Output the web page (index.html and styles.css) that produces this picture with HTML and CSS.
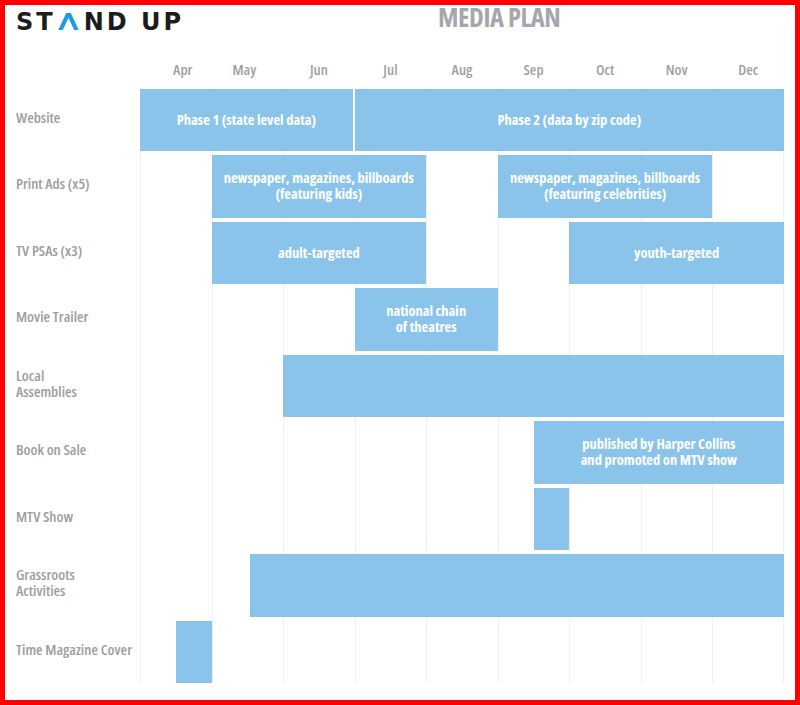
FILE: index.html
```html
<!DOCTYPE html>
<html lang="en">
<head>
<meta charset="utf-8">
<title>Stand Up – Media Plan</title>
<link rel="stylesheet" href="styles.css">
</head>
<body>
<div class="frame">
  <header class="top">
    <div class="logo">ST<svg class="logo-a" viewBox="0 0 21 17.5" width="21" height="17.5" aria-hidden="true"><polygon points="0,17.5 8.2,0 12.8,0 21,17.5 16.4,17.5 10.5,5 4.6,17.5" fill="#1f9be0"/></svg>ND UP</div>
    <h1 class="title">MEDIA PLAN</h1>
  </header>

  <div class="months">
    <span class="month month-first">Apr</span>
    <span class="month month-second">May</span>
    <span class="month">Jun</span>
    <span class="month">Jul</span>
    <span class="month">Aug</span>
    <span class="month">Sep</span>
    <span class="month">Oct</span>
    <span class="month">Nov</span>
    <span class="month">Dec</span>
  </div>

  <div class="chart">
    <div class="gl" style="grid-column: 2 / 4"></div>
    <div class="gl" style="grid-column: 4 / 6"></div>
    <div class="gl" style="grid-column: 6 / 8"></div>
    <div class="gl" style="grid-column: 8 / 10"></div>
    <div class="gl" style="grid-column: 10 / 12"></div>
    <div class="gl" style="grid-column: 12 / 14"></div>
    <div class="gl" style="grid-column: 14 / 16"></div>
    <div class="gl" style="grid-column: 16 / 18"></div>
    <div class="gl gl-last" style="grid-column: 18 / 20"></div>

    <div class="label r1">Website</div>
    <div class="bar r1 bar-split" style="grid-column: 2 / 8">Phase 1 (state level data)</div>
    <div class="bar r1" style="grid-column: 8 / 20">Phase 2 (data by zip code)</div>

    <div class="label r2">Print Ads (x5)</div>
    <div class="bar r2" style="grid-column: 4 / 10">newspaper, magazines, billboards<br>(featuring kids)</div>
    <div class="bar r2" style="grid-column: 12 / 18">newspaper, magazines, billboards<br>(featuring celebrities)</div>

    <div class="label r3">TV PSAs (x3)</div>
    <div class="bar r3" style="grid-column: 4 / 10">adult-targeted</div>
    <div class="bar r3" style="grid-column: 14 / 20">youth-targeted</div>

    <div class="label r4">Movie Trailer</div>
    <div class="bar r4" style="grid-column: 8 / 12">national chain<br>of theatres</div>

    <div class="label r5">Local<br>Assemblies</div>
    <div class="bar r5" style="grid-column: 6 / 20"></div>

    <div class="label r6">Book on Sale</div>
    <div class="bar r6" style="grid-column: 13 / 20">published by Harper Collins<br>and promoted on MTV show</div>

    <div class="label r7">MTV Show</div>
    <div class="bar r7" style="grid-column: 13 / 14"></div>

    <div class="label r8">Grassroots<br>Activities</div>
    <div class="bar r8 bar-late" style="grid-column: 5 / 20"></div>

    <div class="label r9">Time Magazine Cover</div>
    <div class="bar r9" style="grid-column: 3 / 4"></div>
  </div>
</div>
</body>
</html>
```

FILE: styles.css
```css
* { box-sizing: border-box; }

html, body {
  margin: 0;
  padding: 0;
  background: #ffffff;
}

.frame {
  width: 800px;
  height: 705px;
  border: 5px solid #ff0000;
  padding: 0 11px;
  font-family: "Open Sans", "DejaVu Sans Condensed", sans-serif;
  font-stretch: 75%;
  background: #ffffff;
  overflow: hidden;
}

/* ---------- header ---------- */
.top {
  display: grid;
  grid-template-columns: 422px auto;
  height: 52px;
}

.logo {
  margin-top: 5.2px;
  height: 24px;
  font-family: "DejaVu Sans", sans-serif;
  font-stretch: normal;
  font-weight: 700;
  font-size: 24px;
  line-height: 24px;
  letter-spacing: 3px;
  color: #1c1c1c;
  white-space: nowrap;
  display: flex;
  align-items: baseline;
}

.logo-a {
  margin: 0 5px 0 2px;
  flex: 0 0 auto;
}

.title {
  margin: 0;
  font-weight: 700;
  font-size: 26.5px;
  line-height: 24px;
  letter-spacing: -0.4px;
  color: #a5a7ad;
}

/* ---------- months ---------- */
.months {
  display: grid;
  grid-template-columns: 124px repeat(9, 1fr);
  height: 31.5px;
  padding-top: 5.4px;
}

.month {
  text-align: center;
  font-weight: 600;
  font-size: 15px;
  line-height: 15px;
  color: #a0a0a0;
}

.month-first { grid-column: 2; padding-left: 14px; }
.month-second { padding-right: 6px; }

/* ---------- chart ---------- */
.chart {
  display: grid;
  grid-template-columns: 124px repeat(18, 1fr);
  grid-template-rows: repeat(9, 62.5px);
  row-gap: 4px;
}

.gl {
  grid-row: 1 / -1;
  border-left: 1px solid #f0f0f0;
  margin-top: -1px;
}

.gl-last { border-right: 1px solid #f0f0f0; }

.label {
  grid-column: 1;
  display: flex;
  align-items: center;
  padding-bottom: 6px;
  font-weight: 600;
  font-size: 15px;
  line-height: 16px;
  color: #9d9d9d;
}

.bar {
  background: #8bc4ea;
  color: #ffffff;
  font-weight: 700;
  font-size: 14.5px;
  line-height: 16px;
  text-align: center;
  display: flex;
  align-items: center;
  justify-content: center;
}

.bar-split { margin-right: 2px; }
.bar-late { margin-left: 3px; }

.r1 { grid-row: 1; }
.r2 { grid-row: 2; }
.r3 { grid-row: 3; }
.r4 { grid-row: 4; }
.r5 { grid-row: 5; }
.r6 { grid-row: 6; }
.r7 { grid-row: 7; }
.r8 { grid-row: 8; }
.r9 { grid-row: 9; }
```
